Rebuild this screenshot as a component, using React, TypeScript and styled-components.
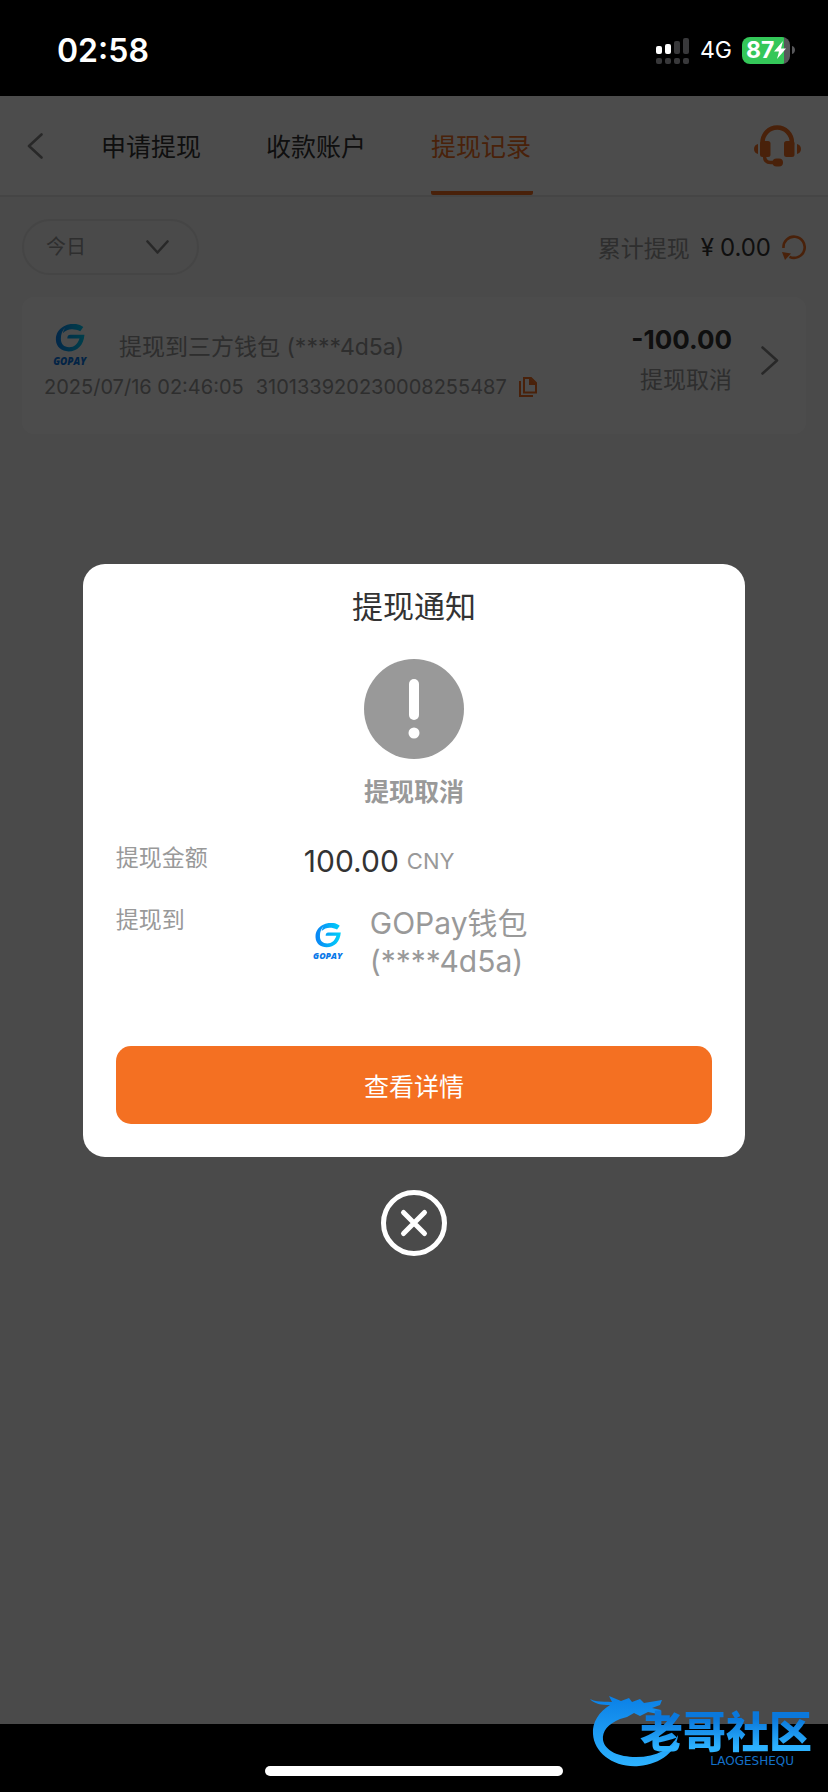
import React from "react";
import styled, { createGlobalStyle } from "styled-components";

const GlobalStyle = createGlobalStyle`
  * { box-sizing: border-box; }
  body { margin: 0; background: #000; }
  body, button, select {
    font-family: Inter, "Noto Sans CJK SC", sans-serif;
  }
  button { border: 0; padding: 0; background: none; cursor: pointer; }
  svg { display: block; flex: none; }
`;

const ORANGE = "#f47022";

const Screen = styled.div`
  position: relative;
  display: flex;
  flex-direction: column;
  min-height: 100vh;
`;

const StatusBar = styled.div`
  display: flex;
  align-items: center;
  justify-content: space-between;
  height: 96px;
  padding: 4px 33px 0 57px;
  color: #fff;
`;

const Clock = styled.time`
  font-size: 32px;
  font-weight: 600;
`;

const StatusIcons = styled.div`
  display: flex;
  align-items: center;
  gap: 10px;
`;

const Network = styled.span`
  font-size: 23px;
  line-height: 28px;
`;

const Battery = styled.div`
  display: flex;
  align-items: center;
  gap: 2px;
`;

const BatteryBody = styled.div`
  display: flex;
  align-items: center;
  width: 48px;
  height: 27px;
  padding-left: 4px;
  border-radius: 8px;
  background: linear-gradient(to right, #34c759 87%, #57575a 87%);
  font-size: 23px;
  font-weight: 700;
`;

const Page = styled.div`
  position: relative;
  display: flex;
  flex: 1;
  flex-direction: column;
  background: #f7f7f7;
`;

const Header = styled.header`
  display: flex;
  align-items: stretch;
  height: 101px;
  padding: 0 27px;
  border-bottom: 2px solid #e6e6e6;
  background: #fff;
`;

const IconButton = styled.button`
  display: flex;
  align-items: center;
`;

const Tabs = styled.nav`
  display: flex;
  flex: 1;
  gap: 63px;
  margin-left: 58px;
`;

const Tab = styled.a<{ $active?: boolean }>`
  display: flex;
  align-items: center;
  padding: 2px 2px 0 0;
  border-bottom: 4px solid ${(p) => (p.$active ? ORANGE : "transparent")};
  border-radius: 2px;
  color: ${(p) => (p.$active ? ORANGE : "#333")};
  font-size: 25px;
  text-decoration: none;
`;

const Content = styled.main`
  display: flex;
  flex-direction: column;
  gap: 22px;
  padding: 22px;
`;

const FilterRow = styled.div`
  display: flex;
  align-items: center;
  justify-content: space-between;
`;

const SelectBox = styled.div`
  display: grid;
  align-items: center;
  width: 177px;
  height: 56px;
  & > * { grid-area: 1 / 1; }
  & > svg { justify-self: end; margin-right: 30px; pointer-events: none; }
`;

const Select = styled.select`
  appearance: none;
  width: 100%;
  height: 100%;
  padding: 0 0 0 22px;
  border: 2px solid #e6e6e6;
  border-radius: 28px;
  background: transparent;
  color: #999;
  font-size: 20px;
`;

const Total = styled.div`
  display: flex;
  align-items: center;
  gap: 11px;
  color: #999;
  font-size: 23px;
`;

const TotalValue = styled.span`
  display: flex;
  align-items: center;
  gap: 6px;
  color: #333;
  font-size: 24px;
`;

const Card = styled.article`
  display: flex;
  align-items: flex-start;
  height: 137px;
  padding: 22px 27px 0 22px;
  border-radius: 12px;
  background: #fff;
  color: #999;
`;

const CardBody = styled.div`
  flex: 1;
`;

const CardTitle = styled.div`
  display: flex;
  align-items: center;
  gap: 31px;
  height: 52px;
  padding-left: 8px;
  font-size: 23px;
`;

const CardMeta = styled.div`
  display: flex;
  align-items: center;
  gap: 12px;
  height: 32px;
  font-size: 20px;
`;

const CardAmount = styled.div`
  display: flex;
  flex-direction: column;
  align-items: flex-end;
  margin-right: 29px;
  font-size: 23px;
  line-height: 41px;
`;

const Amount = styled.strong`
  color: #333;
  font-size: 26px;
  font-weight: 700;
`;

const ArrowSlot = styled.div`
  display: flex;
  align-items: center;
  height: 82px;
`;

const Overlay = styled.div`
  position: absolute;
  inset: 0;
  display: flex;
  flex-direction: column;
  align-items: center;
  justify-content: center;
  gap: 33px;
  background: rgba(0, 0, 0, 0.7);
`;

const Dialog = styled.section`
  display: flex;
  flex-direction: column;
  align-items: center;
  width: 80%;
  padding: 21px 33px 33px;
  border-radius: 22px;
  background: #fff;
  color: #999;
`;

const DialogTitle = styled.h2`
  margin: 0 0 30px;
  color: #333;
  font-size: 31px;
  font-weight: 400;
  line-height: 44px;
`;

const Result = styled.p`
  margin: 14px 0 31px;
  font-size: 25px;
  font-weight: 700;
  line-height: 38px;
`;

const Details = styled.dl`
  display: grid;
  grid-template-columns: 188px 1fr;
  row-gap: 24px;
  align-self: stretch;
  margin: 0 0 66px;
`;

const Label = styled.dt`
  font-size: 23px;
  line-height: 32px;
`;

const Value = styled.dd`
  display: flex;
  align-items: center;
  gap: 8px;
  margin: 0;
  color: #333;
  font-size: 30px;
  line-height: 38px;
`;

const Currency = styled.span`
  color: #999;
  font-size: 22px;
`;

const Wallet = styled(Value)`
  gap: 26px;
  padding-left: 8px;
  color: #999;
`;

const PrimaryButton = styled.button`
  align-self: stretch;
  height: 78px;
  border-radius: 15px;
  background: ${ORANGE};
  color: #fff;
  font-size: 25px;
`;

const HomeBar = styled.footer`
  display: flex;
  align-items: center;
  justify-content: center;
  height: 68px;
  padding-top: 26px;
`;

const HomeHandle = styled.div`
  width: 36%;
  height: 10px;
  border-radius: 5px;
  background: #fff;
`;

const Watermark = styled.div`
  position: absolute;
  right: 16px;
  bottom: 24px;
  display: flex;
`;

const WatermarkText = styled.div`
  display: flex;
  flex-direction: column;
  align-items: flex-end;
  margin-left: -46px;
  padding-top: 20px;
`;

const WatermarkName = styled.span`
  background: linear-gradient(#0a78dc 20%, #2db2ff 85%);
  background-clip: text;
  color: transparent;
  font-size: 43px;
  font-weight: 900;
  line-height: 44px;
`;

const WatermarkLatin = styled.span`
  margin-right: 18px;
  color: #1470c8;
  font-family: "DejaVu Sans", sans-serif;
  font-size: 12px;
  line-height: 14px;
`;

const Chevron = ({ w, h, d }: { w: number; h: number; d: string }) => (
  <svg width={w} height={h} viewBox={`0 0 ${w} ${h}`} fill="none" stroke="#888" strokeWidth="2.600" strokeLinecap="round" strokeLinejoin="round">
    <path d={d} />
  </svg>
);

const Signal = () => (
  <svg width="34" height="27" viewBox="0 0 34 27" fill="#38383a">
    <rect x="0" y="9" width="6" height="8" rx="2" fill="#fff" />
    <rect x="9" y="7" width="6" height="10" rx="2" fill="#fff" />
    <rect x="18" y="4" width="6" height="13" rx="2" />
    <rect x="27" y="1" width="6" height="16" rx="2" />
    {[0, 9, 18, 27].map((x) => (
      <rect key={x} x={x} y="21" width="6" height="6" rx="2" />
    ))}
  </svg>
);

const Headset = () => (
  <svg width="47" height="42" viewBox="0 0 47 42" fill={ORANGE}>
    <path d="M8.500 20V17.500a14.700 15 0 0 1 29.400 0V20" fill="none" stroke={ORANGE} strokeWidth="4.500" />
    <rect x="6" y="16" width="10.500" height="16" rx="2.500" />
    <rect x="30" y="16" width="10.500" height="16" rx="2.500" />
    <path d="M4 19C-1.300 20-1.300 28 4 29zM43 19c5.300 1 5.300 9 0 10z" />
    <path d="M10.500 31c0 4.500 2.500 6.500 6 6.500h5" fill="none" stroke={ORANGE} strokeWidth="3.400" />
    <rect x="18.500" y="33.500" width="10.500" height="8" rx="4" />
  </svg>
);

const Refresh = () => (
  <svg width="24" height="25" viewBox="0 0 24 25">
    <path d="M1.500 13A10.600 10.600 0 1 1 7.500 21.800" fill="none" stroke={ORANGE} strokeWidth="2.600" />
    <path d="M0 17L9 18.500 3 25z" fill={ORANGE} />
  </svg>
);

const Copy = () => (
  <svg width="18" height="20" viewBox="0 0 18 20" fill="none" stroke={ORANGE} strokeWidth="2">
    <path d="M1 4V19H14" />
    <path d="M5 1H12L17 6V15.500H5z" />
    <path d="M11 1V7H17" fill={ORANGE} />
  </svg>
);

const GoPay = ({ width, id }: { width: number; id: string }) => (
  <svg width={width} height={Math.round(width * 1.2)} viewBox="0 0 94 113" role="img" aria-label="GOPAY">
    <defs>
      <linearGradient id={id}>
        <stop offset="0" stopColor="#0a84f5" />
        <stop offset="1" stopColor="#00d2fa" />
      </linearGradient>
    </defs>
    <path
      fill={`url(#${id})`}
      d="M31 6C16 14 9 28 10 43C11 61 25 72 43 72C66 72 83 56 85 28H48C42 28 40 32 40 38H72C67 53 58 61 45 61C31 61 23 53 23 39C23 27 27 17 34 10C31 15 29 19 28 24C40 12 56 11 74 19L82 8C68-3 47-3 31 6Z"
    />
    <text x="46" y="107" textAnchor="middle" fill="#0a78e8" fontFamily="Open Sans, sans-serif" fontSize="26" fontWeight="800" fontStyle="italic">
      GOPAY
    </text>
  </svg>
);

const Alert = () => (
  <svg width="100" height="100" viewBox="0 0 100 100" fill="#fff">
    <circle cx="50" cy="50" r="50" fill="#999" />
    <rect x="45" y="20" width="10" height="41" rx="5" />
    <circle cx="50" cy="74" r="5.500" />
  </svg>
);

const Close = () => (
  <svg width="66" height="66" viewBox="0 0 66 66" fill="none" stroke="#fff" strokeWidth="5" strokeLinecap="round">
    <circle cx="33" cy="33" r="30.500" />
    <path d="M22.500 22.500L43.500 43.500M43.500 22.500L22.500 43.500" />
  </svg>
);

const Dragon = () => (
  <svg width="96" height="78" viewBox="0 0 96 78">
    <defs>
      <linearGradient id="dragon" x2="0" y2="1">
        <stop offset="0" stopColor="#0a80e6" />
        <stop offset="1" stopColor="#2db2ff" />
      </linearGradient>
    </defs>
    <path
      fill="url(#dragon)"
      d="M0 9C7 13 14 11 22 12L19 6L31 11L39 8L42 12L50 9L54 13L72 10L70 15L62 18L71 20L68 24L58 22L50 26L44 23L37 27L30 29C18 34 12 41 13 50C15 61 29 67 46 67C67 67 81 59 88 45C87 61 71 74 49 76C24 78 4 63 3 44C2 32 9 22 20 15C12 15 4 14 0 9Z"
    />
  </svg>
);

export default function App() {
  return (
    <Screen>
      <GlobalStyle />
      <StatusBar>
        <Clock>02:58</Clock>
        <StatusIcons>
          <Signal />
          <Network>4G</Network>
          <Battery>
            <BatteryBody>
              87
              <svg width="12" height="18" viewBox="0 0 12 18" fill="#fff">
                <path d="M9 0L0 10.500H5L3 18L12 7.500H7z" />
              </svg>
            </BatteryBody>
            <svg width="3" height="8" viewBox="0 0 3 8" fill="#57575a">
              <path d="M0 0C4 1 4 7 0 8z" />
            </svg>
          </Battery>
        </StatusIcons>
      </StatusBar>

      <Page>
        <Header>
          <IconButton aria-label="返回">
            <Chevron w={16} h={26} d="M14.500 1.500L2 13L14.500 24.500" />
          </IconButton>
          <Tabs>
            <Tab href="#apply">申请提现</Tab>
            <Tab href="#account">收款账户</Tab>
            <Tab href="#record" $active aria-current="page">提现记录</Tab>
          </Tabs>
          <IconButton aria-label="客服">
            <Headset />
          </IconButton>
        </Header>

        <Content>
          <FilterRow>
            <SelectBox>
              <Select aria-label="日期" defaultValue="today">
                <option value="today">今日</option>
              </Select>
              <Chevron w={23} h={14} d="M1.500 1.500L11.500 12.500L21.500 1.500" />
            </SelectBox>
            <Total>
              累计提现
              <TotalValue>
                <span>¥</span>
                <span>0.00</span>
              </TotalValue>
              <IconButton aria-label="刷新">
                <Refresh />
              </IconButton>
            </Total>
          </FilterRow>

          <Card>
            <CardBody>
              <CardTitle>
                <GoPay width={36} id="gopay-card" />
                <span>提现到三方钱包 (****4d5a)</span>
              </CardTitle>
              <CardMeta>
                <span>2025/07/16 02:46:05</span>
                <span>310133920230008255487</span>
                <IconButton aria-label="复制">
                  <Copy />
                </IconButton>
              </CardMeta>
            </CardBody>
            <CardAmount>
              <Amount>-100.00</Amount>
              <span>提现取消</span>
            </CardAmount>
            <ArrowSlot>
              <Chevron w={18} h={29} d="M1.500 1.500L16 14.500L1.500 27.500" />
            </ArrowSlot>
          </Card>
        </Content>

        <Overlay>
          <Dialog role="dialog" aria-modal="true" aria-labelledby="dialog-title">
            <DialogTitle id="dialog-title">提现通知</DialogTitle>
            <Alert />
            <Result>提现取消</Result>
            <Details>
              <Label>提现金额</Label>
              <Value>
                100.00 <Currency>CNY</Currency>
              </Value>
              <Label>提现到</Label>
              <Wallet>
                <GoPay width={32} id="gopay-dialog" />
                <span>
                  GOPay钱包
                  <br />
                  (****4d5a)
                </span>
              </Wallet>
            </Details>
            <PrimaryButton>查看详情</PrimaryButton>
          </Dialog>
          <IconButton aria-label="关闭">
            <Close />
          </IconButton>
        </Overlay>
      </Page>

      <HomeBar>
        <HomeHandle />
      </HomeBar>

      <Watermark>
        <Dragon />
        <WatermarkText>
          <WatermarkName>老哥社区</WatermarkName>
          <WatermarkLatin>LAOGESHEQU</WatermarkLatin>
        </WatermarkText>
      </Watermark>
    </Screen>
  );
}
